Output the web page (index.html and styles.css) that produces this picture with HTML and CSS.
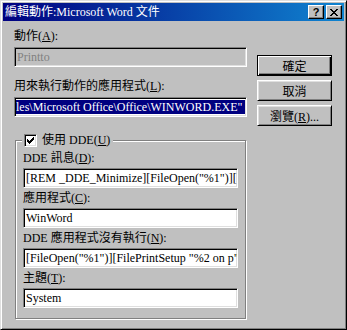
FILE: index.html
```html
<!DOCTYPE html>
<html lang="zh-Hant">
<head>
  <meta charset="UTF-8" />
  <title>編輯動作:Microsoft Word 文件</title>
  <link rel="stylesheet" href="styles.css">
</head>
<body>
  <div class="window">
    <div class="titlebar">
      <span class="title">編輯動作:Microsoft Word 文件</span>
      <div class="title-btns">
        <span class="tbtn help">?</span>
        <span class="tbtn">
          <svg width="8" height="7" viewBox="0 0 8 7">
            <path d="M0 0h2v1h-2zM6 0h2v1h-2zM1 1h2v1h-2zM5 1h2v1h-2zM2 2h4v1h-4zM3 3h2v1h-2zM2 4h4v1h-4zM1 5h2v1h-2zM5 5h2v1h-2zM0 6h2v1h-2zM6 6h2v1h-2z" fill="#000"/>
          </svg>
        </span>
      </div>
    </div>

    <div class="content">
      <div class="main">
        <div class="field">
          <label>動作(<u>A</u>):</label>
          <div class="edit disabled">Printto</div>
        </div>

        <div class="field">
          <label>用來執行動作的應用程式(<u>L</u>):</label>
          <div class="edit"><span class="sel">les\Microsoft Office\Office\WINWORD.EXE" /n</span></div>
        </div>

        <div class="group">
          <div class="legend">
            <span class="check">
              <svg width="7" height="7" viewBox="0 0 7 7">
                <path d="M6 0h1v3h-1zM5 1h1v3h-1zM4 2h1v3h-1zM3 3h1v3h-1zM2 4h1v3h-1zM1 3h1v3h-1zM0 2h1v3h-1z" fill="#000"/>
              </svg>
            </span>
            <span>使用 DDE(<u>U</u>)</span>
          </div>

          <div class="gfield">
            <label>DDE 訊息(<u>D</u>):</label>
            <div class="edit">[REM _DDE_Minimize][FileOpen("%1")][FilePrintSetup</div>
          </div>
          <div class="gfield">
            <label>應用程式(<u>C</u>):</label>
            <div class="edit">WinWord</div>
          </div>
          <div class="gfield">
            <label>DDE 應用程式沒有執行(<u>N</u>):</label>
            <div class="edit">[FileOpen("%1")][FilePrintSetup "%2 on p",.Do</div>
          </div>
          <div class="gfield">
            <label>主題(<u>T</u>):</label>
            <div class="edit">System</div>
          </div>
        </div>
      </div>

      <div class="buttons">
        <button class="btn default">確定</button>
        <button class="btn">取消</button>
        <button class="btn">瀏覽(<u>R</u>)...</button>
      </div>
    </div>
  </div>
</body>
</html>
```

FILE: styles.css
```css
body {
  margin: 0;
  font-family: "Liberation Serif", "Noto Sans CJK TC", serif;
  font-size: 12px;
  color: #000;
}
.window {
  width: 347px;
  height: 330px;
  box-sizing: border-box;
  background: #c0c0c0;
  border: 1px solid;
  border-color: #dfdfdf #000 #000 #dfdfdf;
  box-shadow: inset 1px 1px #fff, inset -1px -1px #808080;
  padding: 2px;
}
.titlebar {
  height: 18px;
  display: flex;
  align-items: center;
  justify-content: space-between;
  padding: 0 2px 0 2px;
  background: linear-gradient(to right, #000080, #1084d0);
}
.title {
  color: #fff;
  line-height: 18px;
}
.title-btns {
  display: flex;
  gap: 2px;
}
.tbtn {
  width: 16px;
  height: 14px;
  box-sizing: border-box;
  display: flex;
  align-items: center;
  justify-content: center;
  background: #c0c0c0;
  border: 1px solid;
  border-color: #fff #000 #000 #fff;
  box-shadow: inset -1px -1px #808080;
}
.help {
  font-family: "Liberation Sans", sans-serif;
  font-weight: bold;
  font-size: 11px;
  line-height: 12px;
}
.content {
  display: flex;
  padding-top: 8px;
}
.main {
  width: 233px;
  margin-left: 11px;
}
.field {
  margin-bottom: 12px;
}
label {
  display: block;
  height: 14px;
  line-height: 14px;
  margin-bottom: 4px;
  white-space: nowrap;
}
.edit {
  height: 20px;
  box-sizing: border-box;
  background: #fff;
  border: 1px solid;
  border-color: #808080 #fff #fff #808080;
  box-shadow: inset 1px 1px #000, inset -1px -1px #dfdfdf;
  padding: 1px 2px 0 2px;
  line-height: 16px;
  white-space: nowrap;
  overflow: hidden;
}
.edit.disabled {
  background: #c0c0c0;
  color: #808080;
}
.sel {
  display: block;
  margin: 1px -1px 0 -1px;
  height: 14px;
  line-height: 14px;
  background: #000080;
  color: #fff;
  overflow: hidden;
}
.group {
  position: relative;
  margin: 23px 0 0 1px;
  width: 231px;
  height: 179px;
  box-sizing: border-box;
  border: 1px solid #808080;
  box-shadow: inset 1px 1px #fff, 1px 1px #fff;
  padding: 10px 7px 0 7px;
}
.legend {
  position: absolute;
  top: -8px;
  left: 6px;
  height: 14px;
  padding: 0 3px 0 2px;
  display: flex;
  align-items: center;
  gap: 5px;
  background: #c0c0c0;
  line-height: 14px;
  white-space: nowrap;
}
.check {
  width: 13px;
  height: 13px;
  box-sizing: border-box;
  display: flex;
  align-items: center;
  justify-content: center;
  background: #fff;
  border: 1px solid;
  border-color: #808080 #fff #fff #808080;
  box-shadow: inset 1px 1px #000, inset -1px -1px #dfdfdf;
}
.gfield {
  margin-bottom: 3px;
}
.gfield label {
  margin-bottom: 3px;
}
.buttons {
  display: flex;
  flex-direction: column;
  gap: 4px;
  margin-left: 10px;
  padding-top: 26px;
}
.btn {
  width: 75px;
  height: 21px;
  box-sizing: border-box;
  padding: 0;
  font: inherit;
  color: #000;
  background: #c0c0c0;
  border: 1px solid;
  border-color: #fff #000 #000 #fff;
  box-shadow: inset 1px 1px #dfdfdf, inset -1px -1px #808080;
}
.btn.default {
  border: 1px solid #000;
  box-shadow: inset 1px 1px #fff, inset -1px -1px #000, inset -2px -2px #808080;
}
```
